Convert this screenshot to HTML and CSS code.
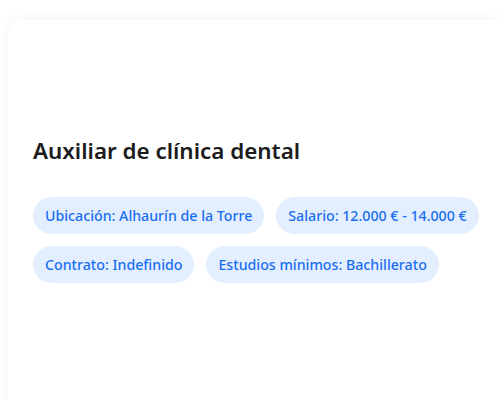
FILE: index.html
```html
<!DOCTYPE html>
<html lang="es">
<head>
<meta charset="utf-8">
<link rel="stylesheet" href="styles.css">
</head>
<body>
<div class="card">
  <div class="spacer"></div>
  <h1 class="title">Auxiliar de clínica dental</h1>
  <div class="chips">
    <span class="chip">Ubicación: Alhaurín de la Torre</span>
    <span class="chip">Salario: 12.000 € - 14.000 €</span>
    <span class="chip">Contrato: Indefinido</span>
    <span class="chip">Estudios mínimos: Bachillerato</span>
  </div>
</div>
</body>
</html>
```
FILE: styles.css
```css
html, body {
  margin: 0;
  padding: 0;
  background: #ffffff;
  font-family: "Noto Sans", "Open Sans", sans-serif;
  overflow: hidden;
}
body {
  padding: 20px 0 0 8px;
  width: 500px;
  height: 400px;
  box-sizing: border-box;
}
.card {
  background: #fff;
  border-radius: 14px 0 0 0;
  box-shadow: 0 0 12px rgba(0, 0, 0, 0.06);
  width: 492px;
  height: 380px;
  padding: 0 0 0 25px;
  box-sizing: border-box;
}
.spacer {
  height: 116px;
}
.title {
  margin: 0;
  font-size: 22.4px;
  font-weight: 600;
  color: #1c1c1c;
  line-height: 30px;
}
.chips {
  margin-top: 31px;
  display: flex;
  flex-wrap: wrap;
  gap: 12px 12px;
}
.chip {
  background: #e3efff;
  color: #1a6ef0;
  font-size: 14.2px;
  font-weight: 500;
  line-height: 37px;
  height: 37px;
  padding: 0 12px;
  border-radius: 19px;
  white-space: nowrap;
}
```
